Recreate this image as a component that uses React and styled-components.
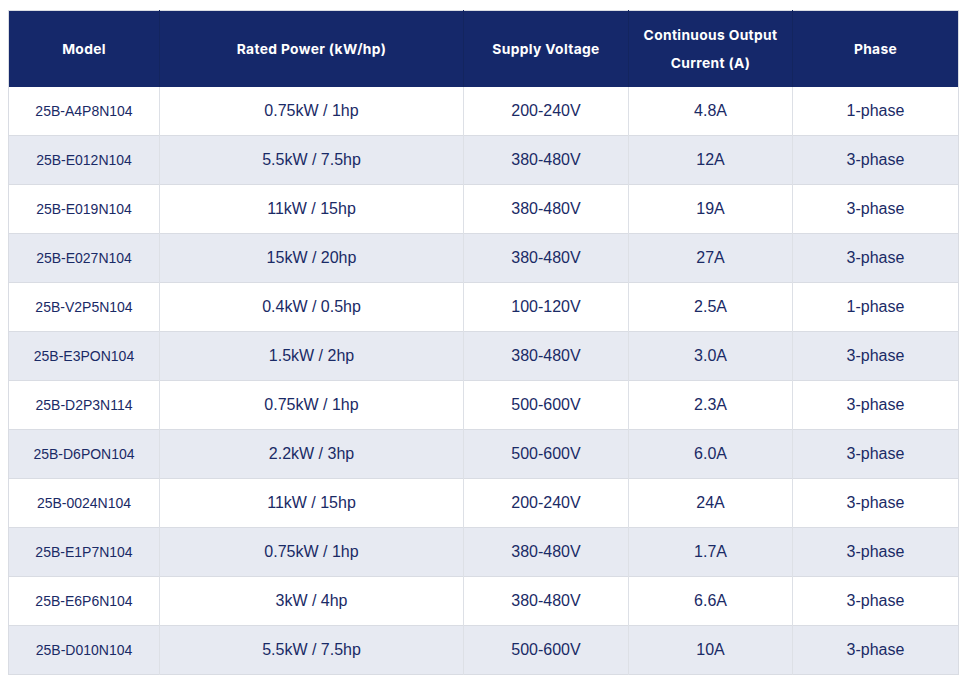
import React from "react";
import styled, { createGlobalStyle } from "styled-components";

const Global = createGlobalStyle`
  html, body { margin: 0; padding: 0; background: #ffffff; }
  body { font-family: "Liberation Sans", Arial, sans-serif; }
`;

const Page = styled.div`
  padding: 10px 10px 0 8px;
`;

const Table = styled.table`
  width: 950px;
  border-collapse: collapse;
  table-layout: fixed;
  border: 1px solid #d9dce3;
`;

const HeadCell = styled.th`
  background: #15286a;
  color: #ffffff;
  font-family: Inter, "Open Sans", sans-serif;
  font-weight: 700;
  font-size: 13.8px;
  letter-spacing: 0.35px;
  line-height: 28px;
  height: 76px;
  box-sizing: border-box;
  padding: 0 14px;
  text-align: center;
  vertical-align: middle;
  border-left: 1px solid #13255f;
  &:first-child { border-left: none; }
`;

const Row = styled.tr`
  background: ${(p) => (p.$striped ? "#e7eaf2" : "#ffffff")};
  border-bottom: 1px solid #d9dce3;
`;

const Cell = styled.td`
  height: 48px;
  padding: 0 8px;
  text-align: center;
  vertical-align: middle;
  color: #1a2a66;
  font-family: "Liberation Sans", Arial, sans-serif;
  font-size: ${(p) => (p.$small ? "14px" : "16px")};
  border-left: 1px solid #dde0e6;
  &:first-child { border-left: none; }
`;

const cols = [151, 304, 165, 164, 166];
const headers = [
  "Model",
  "Rated Power (kW/hp)",
  "Supply Voltage",
  "Continuous Output Current (A)",
  "Phase",
];

const rows = [
  ["25B-A4P8N104", "0.75kW / 1hp", "200-240V", "4.8A", "1-phase"],
  ["25B-E012N104", "5.5kW / 7.5hp", "380-480V", "12A", "3-phase"],
  ["25B-E019N104", "11kW / 15hp", "380-480V", "19A", "3-phase"],
  ["25B-E027N104", "15kW / 20hp", "380-480V", "27A", "3-phase"],
  ["25B-V2P5N104", "0.4kW / 0.5hp", "100-120V", "2.5A", "1-phase"],
  ["25B-E3PON104", "1.5kW / 2hp", "380-480V", "3.0A", "3-phase"],
  ["25B-D2P3N114", "0.75kW / 1hp", "500-600V", "2.3A", "3-phase"],
  ["25B-D6PON104", "2.2kW / 3hp", "500-600V", "6.0A", "3-phase"],
  ["25B-0024N104", "11kW / 15hp", "200-240V", "24A", "3-phase"],
  ["25B-E1P7N104", "0.75kW / 1hp", "380-480V", "1.7A", "3-phase"],
  ["25B-E6P6N104", "3kW / 4hp", "380-480V", "6.6A", "3-phase"],
  ["25B-D010N104", "5.5kW / 7.5hp", "500-600V", "10A", "3-phase"],
];

export default function App() {
  return (
    <>
      <Global />
      <Page>
        <Table>
          <colgroup>
            {cols.map((w, i) => (
              <col key={i} style={{ width: w }} />
            ))}
          </colgroup>
          <thead>
            <tr>
              {headers.map((h) => (
                <HeadCell key={h}>{h}</HeadCell>
              ))}
            </tr>
          </thead>
          <tbody>
            {rows.map((r, i) => (
              <Row key={i} $striped={i % 2 === 1}>
                {r.map((c, j) => (
                  <Cell key={j} $small={j === 0}>
                    {c}
                  </Cell>
                ))}
              </Row>
            ))}
          </tbody>
        </Table>
      </Page>
    </>
  );
}
